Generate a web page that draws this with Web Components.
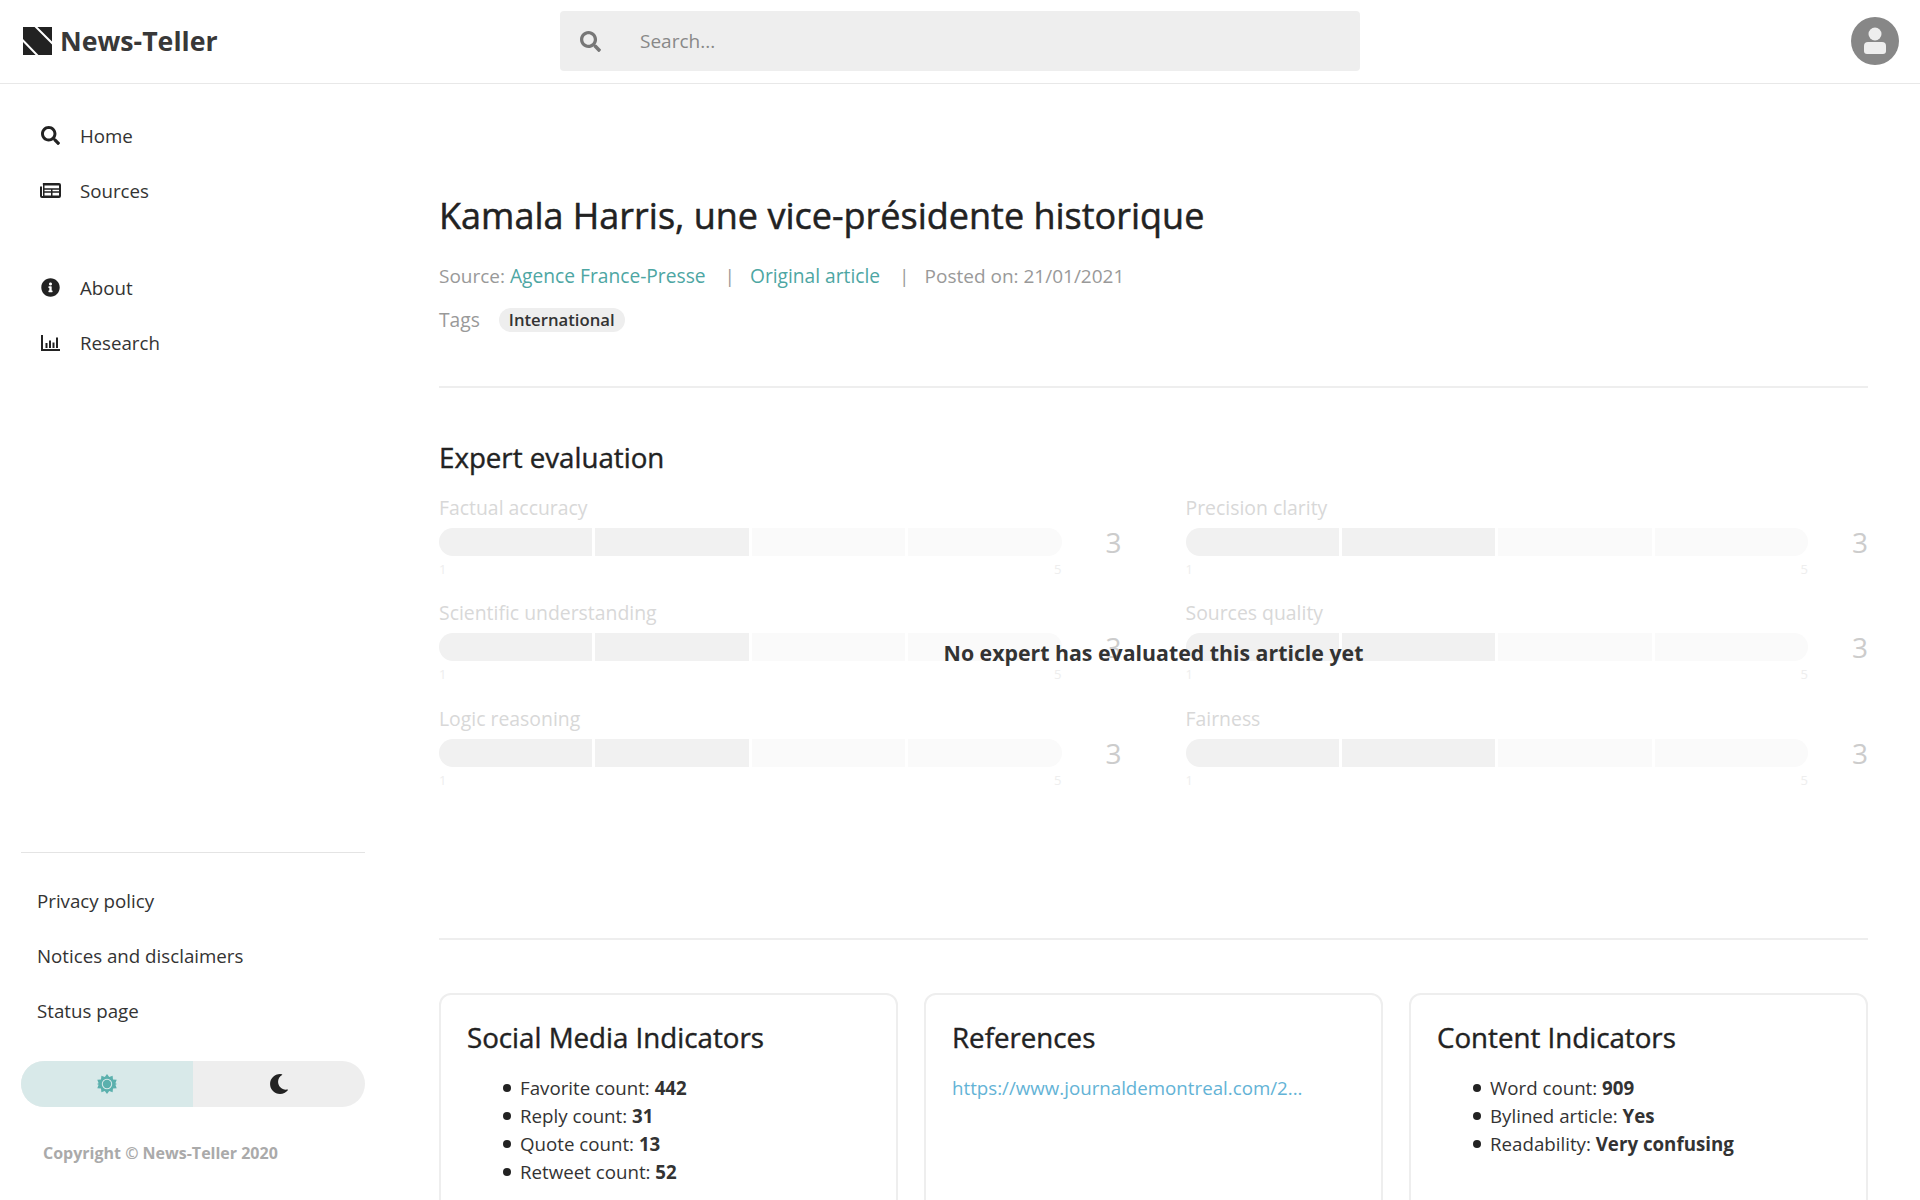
<!DOCTYPE html>
<html lang="en">
<head>
<meta charset="utf-8">
<title>News-Teller</title>
<style>
  html, body { margin: 0; height: 100%; }
  body {
    overflow: hidden;
    background: #fff;
    color: #333;
    font-family: "Open Sans", "Liberation Sans", sans-serif;
    font-size: 18.720px;
  }
</style>
</head>
<body>
<nt-app>
  <nt-header slot="header"></nt-header>
  <nt-sidebar slot="side">
    <nt-nav-link icon="search">Home</nt-nav-link>
    <nt-nav-link icon="news">Sources</nt-nav-link>
    <nt-nav-link icon="info" slot="second">About</nt-nav-link>
    <nt-nav-link icon="chart" slot="second">Research</nt-nav-link>
    <nt-foot-link slot="foot">Privacy policy</nt-foot-link>
    <nt-foot-link slot="foot">Notices and disclaimers</nt-foot-link>
    <nt-foot-link slot="foot">Status page</nt-foot-link>
  </nt-sidebar>
  <nt-article>
    <nt-rating slot="ratings" label="Factual accuracy"></nt-rating>
    <nt-rating slot="ratings" label="Precision clarity"></nt-rating>
    <nt-rating slot="ratings" label="Scientific understanding"></nt-rating>
    <nt-rating slot="ratings" label="Sources quality"></nt-rating>
    <nt-rating slot="ratings" label="Logic reasoning"></nt-rating>
    <nt-rating slot="ratings" label="Fairness"></nt-rating>

    <nt-card slot="cards" heading="Social Media Indicators">
      <nt-stat>Favorite count: <b>442</b></nt-stat>
      <nt-stat>Reply count: <b>31</b></nt-stat>
      <nt-stat>Quote count: <b>13</b></nt-stat>
      <nt-stat>Retweet count: <b>52</b></nt-stat>
    </nt-card>
    <nt-card slot="cards" heading="References">
      <a class="ref">https://www.journaldemontreal.com/2...</a>
    </nt-card>
    <nt-card slot="cards" heading="Content Indicators">
      <nt-stat>Word count: <b>909</b></nt-stat>
      <nt-stat>Bylined article: <b>Yes</b></nt-stat>
      <nt-stat>Readability: <b>Very confusing</b></nt-stat>
    </nt-card>
  </nt-article>
</nt-app>

<script>
  const icons = {
    search: '<svg viewBox="0 0 512 512"><path d="M505 442.7L405.3 343c-4.5-4.5-10.6-7-17-7H372c27.6-35.3 44-79.7 44-128C416 93.1 322.9 0 208 0S0 93.1 0 208s93.1 208 208 208c48.3 0 92.7-16.4 128-44v16.3c0 6.4 2.5 12.5 7 17l99.7 99.7c9.4 9.4 24.6 9.4 33.9 0l28.3-28.3c9.4-9.4 9.4-24.6.1-34zM208 336c-70.7 0-128-57.2-128-128 0-70.7 57.2-128 128-128 70.7 0 128 57.2 128 128 0 70.7-57.2 128-128 128z"/></svg>',
    news: '<svg viewBox="0 0 21 15"><path fill-rule="evenodd" d="M2 0h17a2 2 0 0 1 2 2v11a2 2 0 0 1-2 2H2a2 2 0 0 1-2-2V3.500h2V13h1V2a2 2 0 0 1 0-2zM4.500 2.500v2.800h14.500V2.500zM4.500 6.700v1.600h6.500V6.700zM12.500 6.700v1.600H19V6.700zM4.500 9.700v2.800h6.500V9.700zM12.500 9.700v2.800H19V9.700z"/></svg>',
    info: '<svg viewBox="0 0 512 512"><path d="M256 8C119 8 8 119.100 8 256c0 137 111 248 248 248s248-111 248-248C504 119.100 393 8 256 8zm0 110c23.200 0 42 18.800 42 42s-18.800 42-42 42-42-18.800-42-42 18.800-42 42-42zm56 254c0 6.600-5.400 12-12 12h-88c-6.600 0-12-5.400-12-12v-24c0-6.600 5.400-12 12-12h12v-64h-12c-6.600 0-12-5.400-12-12v-24c0-6.600 5.400-12 12-12h64c6.600 0 12 5.400 12 12v100h12c6.600 0 12 5.400 12 12v24z"/></svg>',
    chart: '<svg viewBox="0 0 19 16"><path d="M0 0h2v14h17v2H0z"/><path d="M4.500 8h2v5h-2zM8 5.500h2V13H8zM11.500 7.500h2V13h-2zM15 2.500h2V13h-2z"/></svg>',
    moon: '<svg viewBox="0 0 512 512"><path d="M283.211 512c78.962 0 151.079-35.925 198.857-94.792 7.068-8.708-.639-21.430-11.562-19.350-124.203 23.654-238.262-71.576-238.262-196.954 0-72.222 38.662-138.635 101.498-174.394 9.686-5.512 7.250-20.197-3.756-22.230A258.156 258.156 0 0 0 283.211 0c-141.309 0-256 114.511-256 256 0 141.309 114.511 256 256 256z"/></svg>',
    sun: '<svg viewBox="0 0 20 20"><path fill-rule="evenodd" d="M10 0l2.200 3 3.400-1.300.4 3.700 3.700.4L18.400 9.200 20 10l-1.600.8 1.300 3.400-3.700.4-.4 3.700-3.400-1.300L10 20l-2.200-3-3.400 1.300-.4-3.700-3.700-.4 1.300-3.400L0 10l1.600-.8L.3 5.800l3.700-.4.4-3.700L7.800 3zM10 4.800a5.200 5.200 0 1 0 0 10.400a5.200 5.200 0 0 0 0-10.400z"/><circle cx="10" cy="10" r="4.200"/></svg>'
  };

  class NtApp extends HTMLElement {
    constructor() {
      super();
      this.attachShadow({ mode: 'open' }).innerHTML = `
        <style>
          :host { display: block; height: 100vh; overflow: hidden; }
          .body { display: flex; height: 1116px; }
          ::slotted(nt-sidebar) { flex: 0 0 386px; }
          ::slotted(nt-article) { flex: 1; min-width: 0; }
        </style>
        <slot name="header"></slot>
        <div class="body">
          <slot name="side"></slot>
          <slot></slot>
        </div>`;
    }
  }

  class NtHeader extends HTMLElement {
    constructor() {
      super();
      this.attachShadow({ mode: 'open' }).innerHTML = `
        <style>
          :host {
            display: grid;
            grid-template-columns: 1fr 800px 1fr;
            align-items: center;
            box-sizing: border-box;
            height: 84px;
            padding-bottom: 1px;
            border-bottom: 1px solid #e8e8e8;
          }
          .brand { display: flex; align-items: center; gap: 8px; padding-left: 23px; }
          .brand svg { width: 29px; height: 28px; }
          .brand span { font-size: 26.700px; font-weight: 700; color: #383838; line-height: 1; }
          .search {
            display: flex; align-items: center;
            height: 60px; background: #eee; border-radius: 4px;
          }
          .search svg { width: 21px; height: 21px; fill: #777; margin-left: 20px; }
          .search span { margin-left: 39px; color: #888; font-size: 19px; }
          .user { justify-self: end; margin-right: 21px; width: 48px; height: 48px; }
          .user svg { display: block; width: 48px; height: 48px; }
        </style>
        <div class="brand">
          <svg viewBox="0 0 29 28">
            <rect width="29" height="28" fill="#222"/>
            <path stroke="#fff" stroke-width="2" fill="none" d="M12 -1L30 17M-1 12.500L15 29"/>
          </svg>
          <span>News-Teller</span>
        </div>
        <div class="search">${icons.search}<span>Search...</span></div>
        <div class="user">
          <svg viewBox="0 0 48 48">
            <circle cx="24" cy="24" r="24" fill="#878787"/>
            <circle cx="24" cy="17" r="6.500" fill="#eee"/>
            <path fill="#eee" d="M17 25h14a4 4 0 0 1 4 4v5a3 3 0 0 1-3 3H16a3 3 0 0 1-3-3v-5a4 4 0 0 1 4-4z"/>
          </svg>
        </div>`;
    }
  }

  class NtSidebar extends HTMLElement {
    constructor() {
      super();
      this.attachShadow({ mode: 'open' }).innerHTML = `
        <style>
          :host { display: flex; flex-direction: column; height: 100%; padding: 24px 21px 0; box-sizing: border-box; }
          .second { margin-top: 42px; }
          .foot { margin-top: auto; border-top: 1px solid #e4e4e4; padding-top: 20px; }
          .toggle {
            display: flex; height: 46px; margin-top: 23px;
            border-radius: 23px; overflow: hidden; background: #eee;
          }
          .toggle div { flex: 1; display: flex; align-items: center; justify-content: center; }
          .toggle .on { background: #d8e9e9; }
          .toggle svg { width: 20px; height: 20px; }
          .on svg { fill: #5bb0ad; }
          .off svg { fill: #222; }
          .copy {
            margin: 35px 0 36px 22px;
            font-size: 16px; line-height: 22px; font-weight: 700; color: #aaa;
          }
        </style>
        <slot></slot>
        <div class="second"><slot name="second"></slot></div>
        <div class="foot">
          <slot name="foot"></slot>
          <div class="toggle">
            <div class="on">${icons.sun}</div>
            <div class="off">${icons.moon}</div>
          </div>
          <div class="copy">Copyright © News-Teller 2020</div>
        </div>`;
    }
  }

  class NtNavLink extends HTMLElement {
    constructor() {
      super();
      this.attachShadow({ mode: 'open' }).innerHTML = `
        <style>
          :host { display: flex; align-items: center; height: 55px; padding-left: 19px; color: #333; font-size: 18.720px; }
          .ic { width: 21px; height: 21px; margin-right: 19px; display: flex; align-items: center; justify-content: center; }
          svg { width: 100%; fill: #222; display: block; }
          .small svg { width: 19px; }
        </style>
        <span class="ic">${icons[this.getAttribute('icon')]}</span>
        <slot></slot>`;
      if (this.getAttribute('icon') !== 'news') {
        this.shadowRoot.querySelector('.ic').classList.add('small');
      }
    }
  }

  class NtFootLink extends HTMLElement {
    constructor() {
      super();
      this.attachShadow({ mode: 'open' }).innerHTML = `
        <style>
          :host { display: flex; align-items: center; height: 55px; padding-left: 16px; color: #333; font-size: 18.720px; }
        </style>
        <slot></slot>`;
    }
  }

  class NtRating extends HTMLElement {
    constructor() {
      super();
      this.attachShadow({ mode: 'open' }).innerHTML = `
        <style>
          :host { display: block; }
          .label { font-size: 19.400px; line-height: 24px; color: #d8d8d8; }
          .line { display: flex; align-items: center; margin-top: 8px; }
          .bar {
            flex: 1; display: grid; grid-template-columns: repeat(4, 1fr); gap: 3px;
            height: 28px; border-radius: 14px; overflow: hidden;
          }
          .bar i { display: block; background: #fafafa; }
          .bar i.full { background: #f1f1f1; }
          .val { width: 60px; text-align: right; font-size: 28px; line-height: 28px; font-weight: 500; color: #ccc; }
          .scale {
            display: flex; justify-content: space-between;
            margin: 5px 60px 0 0;
            font-size: 13px; line-height: 16px; color: #eee;
          }
        </style>
        <div class="label">${this.getAttribute('label')}</div>
        <div class="line">
          <div class="bar"><i class="full"></i><i class="full"></i><i></i><i></i></div>
          <div class="val">3</div>
        </div>
        <div class="scale"><span>1</span><span>5</span></div>`;
    }
  }

  class NtStat extends HTMLElement {
    constructor() {
      super();
      this.attachShadow({ mode: 'open' }).innerHTML = `
        <style>
          :host { display: block; position: relative; padding-left: 53px; font-size: 18.720px; line-height: 28px; color: #333; }
          .dot { position: absolute; left: 36px; top: 10px; width: 8px; height: 8px; border-radius: 50%; background: #222; }
        </style>
        <span class="dot"></span><slot></slot>`;
    }
  }

  class NtCard extends HTMLElement {
    constructor() {
      super();
      this.attachShadow({ mode: 'open' }).innerHTML = `
        <style>
          :host {
            display: block; box-sizing: border-box; min-height: 260px;
            border: 2px solid #eee; border-radius: 12px;
            padding: 24px 26px;
          }
          h3 { margin: 0 0 19px; font-size: 27.700px; line-height: 36px; font-weight: 500; color: #222; -webkit-text-stroke: 0.4px #222; }
          ::slotted(.ref) { font-size: 18.720px; line-height: 28px; color: #63b3d6; display: block; }
        </style>
        <h3>${this.getAttribute('heading')}</h3>
        <slot></slot>`;
    }
  }

  class NtArticle extends HTMLElement {
    constructor() {
      super();
      this.attachShadow({ mode: 'open' }).innerHTML = `
        <style>
          :host { display: block; padding: 108px 52px 0 53px; }
          h1 { margin: 0; font-size: 36px; line-height: 48px; font-weight: 500; color: #222; -webkit-text-stroke: 0.5px #222; }
          .meta { display: flex; margin-top: 22px; line-height: 28px; color: #999; font-size: 19px; }
          .meta a { color: #4da6a3; font-size: 19.200px; font-weight: 500; }
          .meta i { font-style: normal; margin: 0 15px 0 19px; color: #999; }
          .tags { display: flex; align-items: center; margin-top: 16px; height: 28px; color: #999; font-size: 19.200px; }
          .tags span:first-child { margin-bottom: 2px; }
          .tag {
            margin-left: 19px; padding: 0 10px; height: 24px; line-height: 24px;
            border-radius: 12px; background: #eee; color: #333;
            font-size: 16.700px; font-weight: 600;
          }
          hr { border: 0; border-top: 2px solid #eee; margin: 0; }
          .top { margin-top: 52px; }
          h2 { margin: 51px 0 21px; font-size: 27.700px; line-height: 36px; font-weight: 500; color: #222; -webkit-text-stroke: 0.4px #222; }
          .eval { position: relative; }
          .ratings { display: grid; grid-template-columns: 1fr 1fr; column-gap: 64px; row-gap: 24.300px; }
          .none {
            position: absolute; left: 0; right: 0; top: 143px;
            text-align: center; font-size: 21.300px; line-height: 28px; font-weight: 700; color: #333;
          }
          .low { margin-top: 150px; }
          .cards { display: grid; grid-template-columns: repeat(3, 1fr); gap: 26px; margin-top: 53px; }
        </style>
        <h1>Kamala Harris, une vice-présidente historique</h1>
        <div class="meta">
          <span>Source:&nbsp;</span><a>Agence France-Presse</a><i>|</i><a>Original article</a><i>|</i><span>Posted on: 21/01/2021</span>
        </div>
        <div class="tags"><span>Tags</span><span class="tag">International</span></div>
        <hr class="top">
        <h2>Expert evaluation</h2>
        <div class="eval">
          <div class="ratings"><slot name="ratings"></slot></div>
          <div class="none">No expert has evaluated this article yet</div>
        </div>
        <hr class="low">
        <div class="cards"><slot name="cards"></slot></div>`;
    }
  }

  customElements.define('nt-app', NtApp);
  customElements.define('nt-header', NtHeader);
  customElements.define('nt-sidebar', NtSidebar);
  customElements.define('nt-nav-link', NtNavLink);
  customElements.define('nt-foot-link', NtFootLink);
  customElements.define('nt-rating', NtRating);
  customElements.define('nt-stat', NtStat);
  customElements.define('nt-card', NtCard);
  customElements.define('nt-article', NtArticle);
</script>
</body>
</html>
